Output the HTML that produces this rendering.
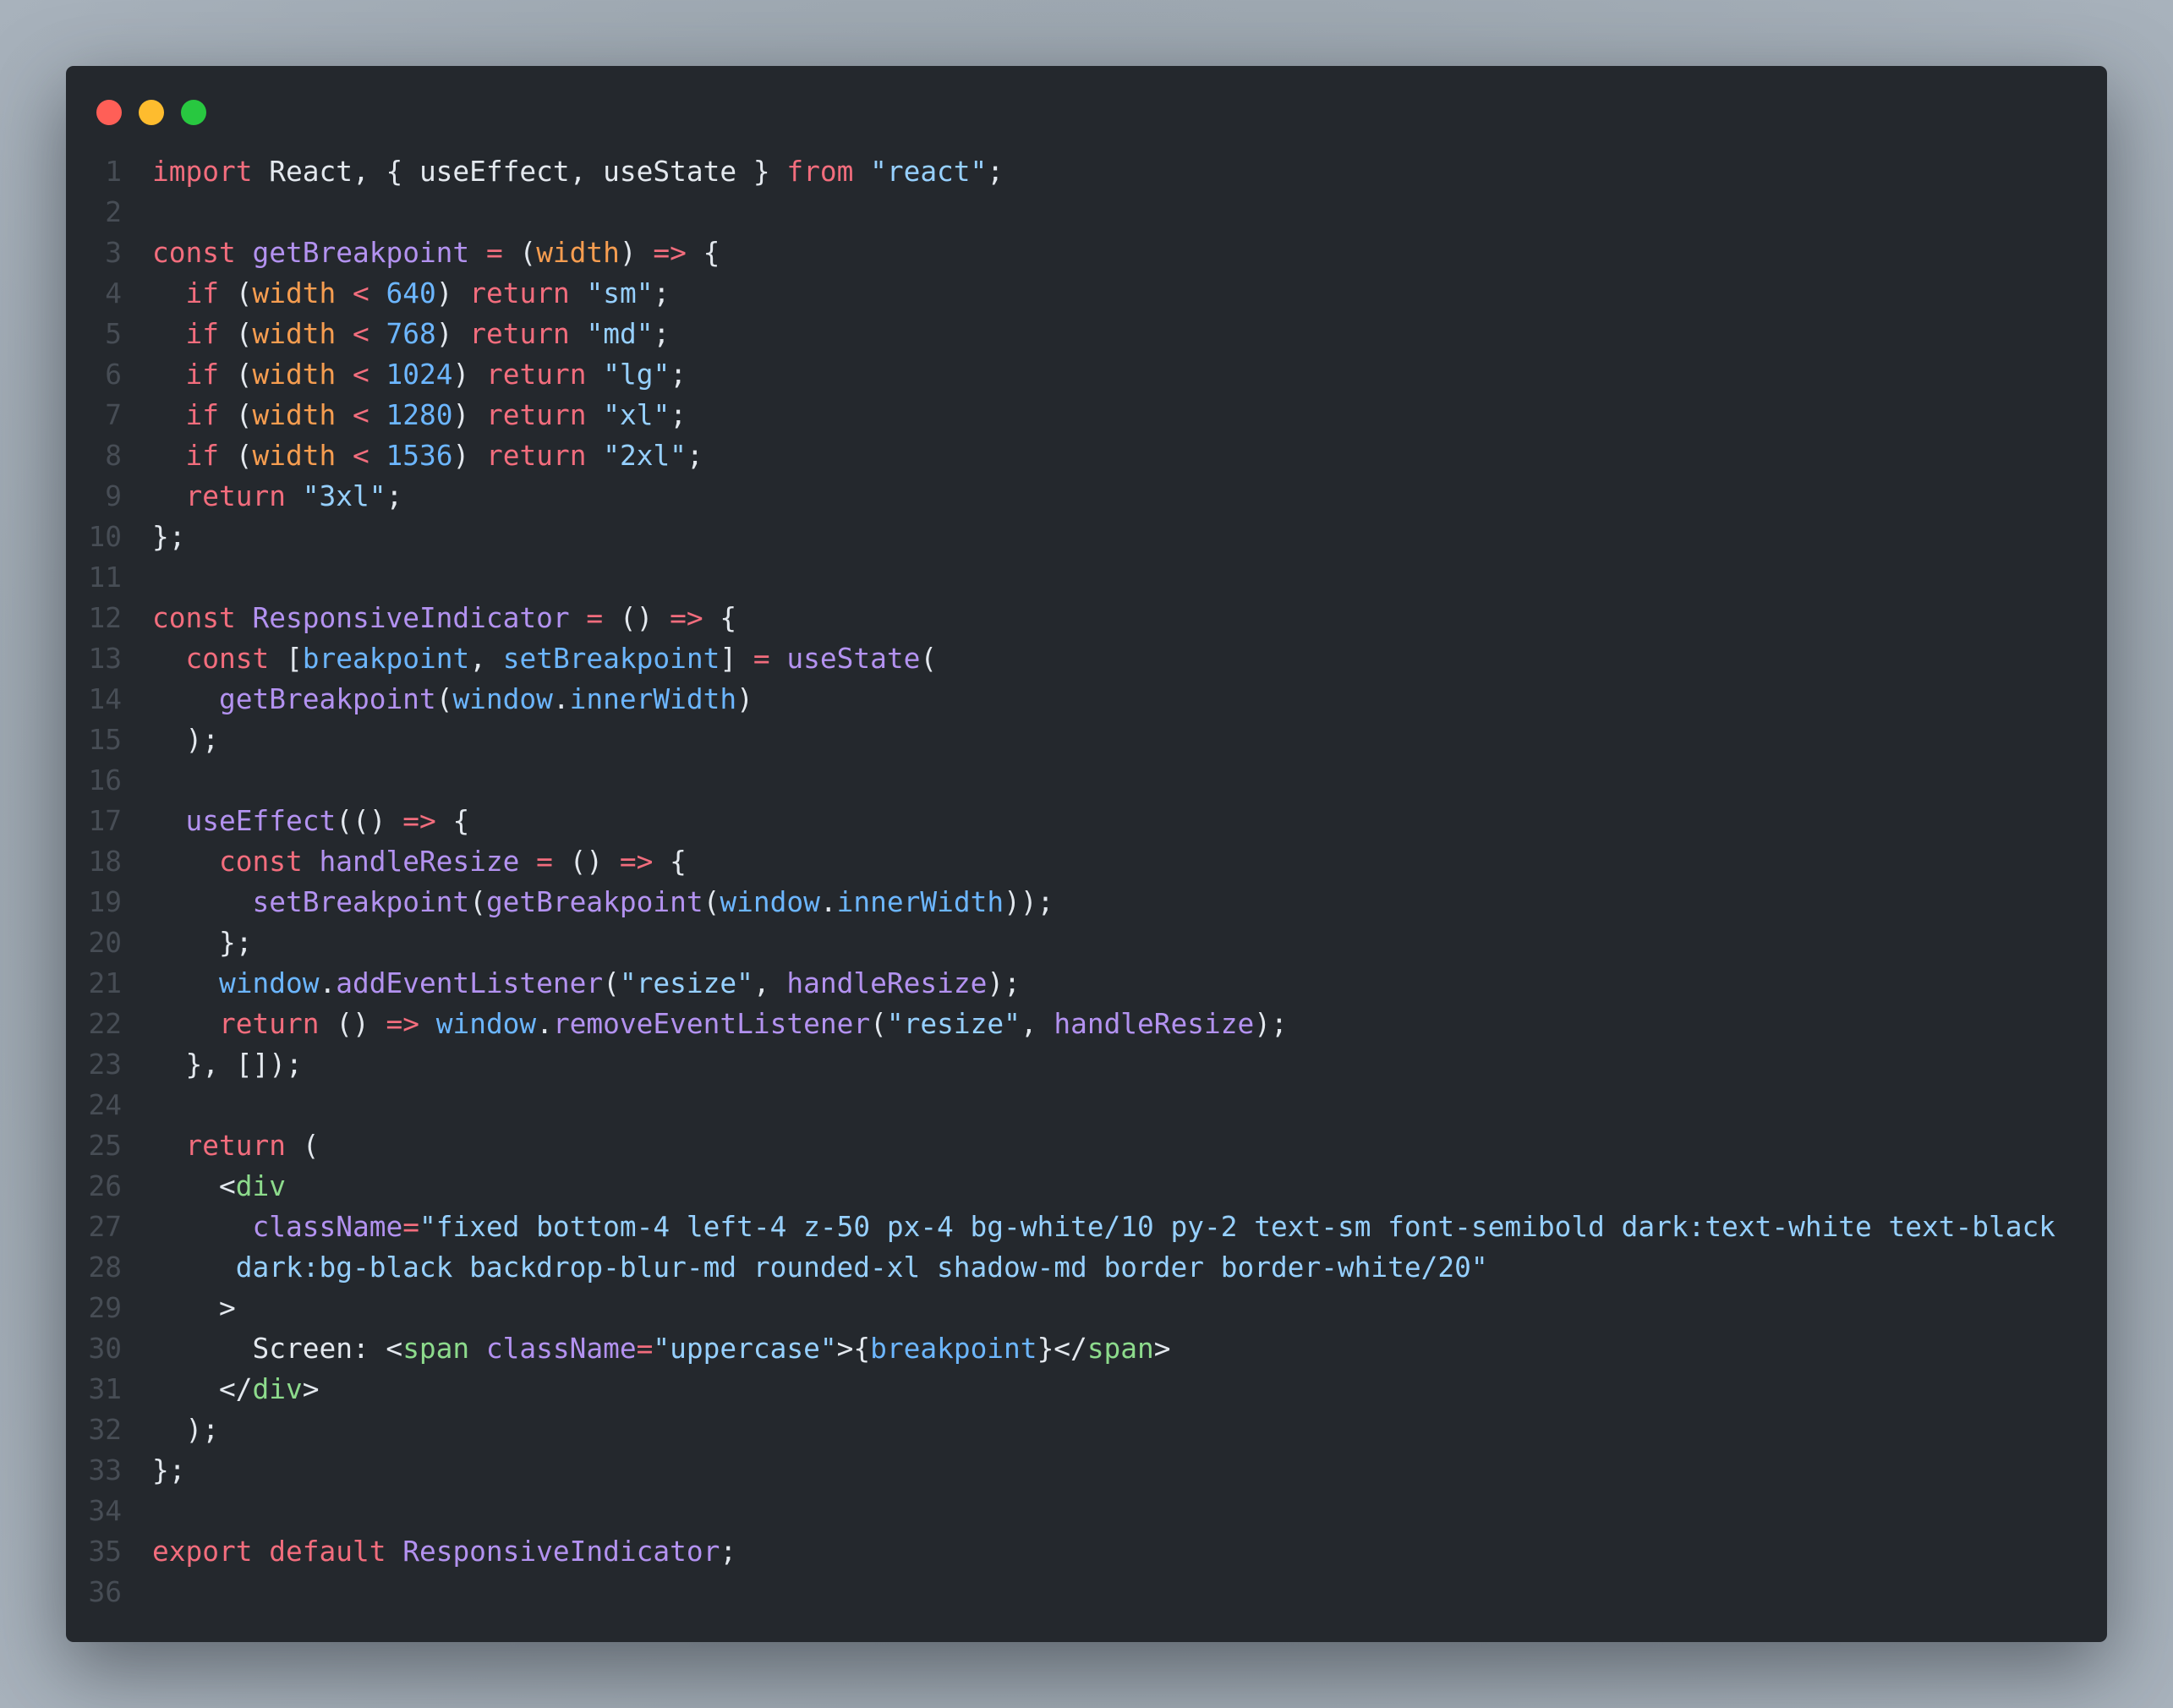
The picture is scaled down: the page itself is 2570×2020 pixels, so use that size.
<!DOCTYPE html>
<html><head><meta charset="utf-8"><style>
html,body{margin:0;padding:0;width:2570px;height:2020px;overflow:hidden;background:radial-gradient(ellipse at 50% 50%,#8a939c 0%,#9aa4ad 60%,#a8b2bc 100%);}
.win{position:absolute;left:78px;top:78px;width:2414px;height:1864px;background:#24282d;border-radius:9px;box-shadow:0 30px 90px rgba(40,45,52,0.55);}
.dot{position:absolute;top:40px;width:30px;height:30px;border-radius:50%;}
.code{position:absolute;left:0;top:101px;font-family:"DejaVu Sans Mono","Liberation Mono",monospace;font-size:32.8px;line-height:48px;color:#e3e8ee;white-space:pre;}
.ln{display:inline-block;width:66px;text-align:right;color:#474d55;margin-right:36px;}
.k{color:#f26d7d}.f{color:#b392f0}.o{color:#f69d50}.n{color:#6cb6ff}.s{color:#96d0ff}.g{color:#8ddb8c}.v{color:#6cb6ff}
</style></head><body>
<div class="win">
<div class="dot" style="left:36px;background:#ff5f57"></div>
<div class="dot" style="left:86px;background:#febc2e"></div>
<div class="dot" style="left:136px;background:#28c840"></div>
<div class="code"><div><span class="ln">1</span><span class="k">import</span> React, { useEffect, useState } <span class="k">from</span> <span class="s">"react"</span>;</div><div><span class="ln">2</span></div><div><span class="ln">3</span><span class="k">const</span> <span class="f">getBreakpoint</span> <span class="k">=</span> (<span class="o">width</span>) <span class="k">=&gt;</span> {</div><div><span class="ln">4</span>  <span class="k">if</span> (<span class="o">width</span> <span class="k">&lt;</span> <span class="n">640</span>) <span class="k">return</span> <span class="s">"sm"</span>;</div><div><span class="ln">5</span>  <span class="k">if</span> (<span class="o">width</span> <span class="k">&lt;</span> <span class="n">768</span>) <span class="k">return</span> <span class="s">"md"</span>;</div><div><span class="ln">6</span>  <span class="k">if</span> (<span class="o">width</span> <span class="k">&lt;</span> <span class="n">1024</span>) <span class="k">return</span> <span class="s">"lg"</span>;</div><div><span class="ln">7</span>  <span class="k">if</span> (<span class="o">width</span> <span class="k">&lt;</span> <span class="n">1280</span>) <span class="k">return</span> <span class="s">"xl"</span>;</div><div><span class="ln">8</span>  <span class="k">if</span> (<span class="o">width</span> <span class="k">&lt;</span> <span class="n">1536</span>) <span class="k">return</span> <span class="s">"2xl"</span>;</div><div><span class="ln">9</span>  <span class="k">return</span> <span class="s">"3xl"</span>;</div><div><span class="ln">10</span>};</div><div><span class="ln">11</span></div><div><span class="ln">12</span><span class="k">const</span> <span class="f">ResponsiveIndicator</span> <span class="k">=</span> () <span class="k">=&gt;</span> {</div><div><span class="ln">13</span>  <span class="k">const</span> [<span class="v">breakpoint</span>, <span class="v">setBreakpoint</span>] <span class="k">=</span> <span class="f">useState</span>(</div><div><span class="ln">14</span>    <span class="f">getBreakpoint</span>(<span class="v">window</span>.<span class="v">innerWidth</span>)</div><div><span class="ln">15</span>  );</div><div><span class="ln">16</span></div><div><span class="ln">17</span>  <span class="f">useEffect</span>(() <span class="k">=&gt;</span> {</div><div><span class="ln">18</span>    <span class="k">const</span> <span class="f">handleResize</span> <span class="k">=</span> () <span class="k">=&gt;</span> {</div><div><span class="ln">19</span>      <span class="f">setBreakpoint</span>(<span class="f">getBreakpoint</span>(<span class="v">window</span>.<span class="v">innerWidth</span>));</div><div><span class="ln">20</span>    };</div><div><span class="ln">21</span>    <span class="v">window</span>.<span class="f">addEventListener</span>(<span class="s">"resize"</span>, <span class="f">handleResize</span>);</div><div><span class="ln">22</span>    <span class="k">return</span> () <span class="k">=&gt;</span> <span class="v">window</span>.<span class="f">removeEventListener</span>(<span class="s">"resize"</span>, <span class="f">handleResize</span>);</div><div><span class="ln">23</span>  }, []);</div><div><span class="ln">24</span></div><div><span class="ln">25</span>  <span class="k">return</span> (</div><div><span class="ln">26</span>    &lt;<span class="g">div</span></div><div><span class="ln">27</span>      <span class="f">className</span><span class="k">=</span><span class="s">"fixed bottom-4 left-4 z-50 px-4 bg-white/10 py-2 text-sm font-semibold dark:text-white text-black</span></div><div><span class="ln">28</span><span class="s">     dark:bg-black backdrop-blur-md rounded-xl shadow-md border border-white/20"</span></div><div><span class="ln">29</span>    &gt;</div><div><span class="ln">30</span>      Screen: &lt;<span class="g">span</span> <span class="f">className</span><span class="k">=</span><span class="s">"uppercase"</span>&gt;{<span class="v">breakpoint</span>}&lt;/<span class="g">span</span>&gt;</div><div><span class="ln">31</span>    &lt;/<span class="g">div</span>&gt;</div><div><span class="ln">32</span>  );</div><div><span class="ln">33</span>};</div><div><span class="ln">34</span></div><div><span class="ln">35</span><span class="k">export</span> <span class="k">default</span> <span class="f">ResponsiveIndicator</span>;</div><div><span class="ln">36</span></div></div>
</div>
</body></html>
